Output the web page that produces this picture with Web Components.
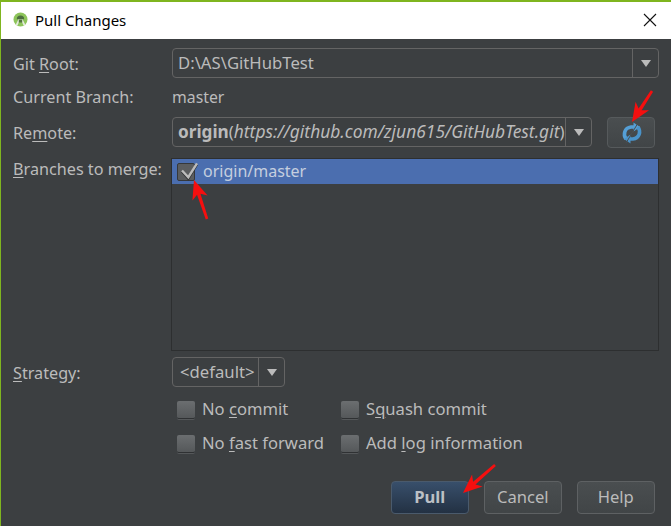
<!DOCTYPE html>
<html>
<head>
<meta charset="utf-8">
<title>Pull Changes</title>
<style>
html, body { margin: 0; padding: 0; background: #3c3f41; }
body { width: 671px; height: 526px; overflow: hidden; font-family: "Noto Sans", sans-serif; font-size: 16.2px; color: #bbbbbb; }
u { text-underline-offset: 2px; text-decoration-thickness: 1px; }
b { font-weight: 700; font-size: 17.2px; }
i { font-style: italic; font-size: 17.4px; }
</style>
</head>
<body>
<pull-dialog>
  <ij-titlebar slot="title">Pull Changes</ij-titlebar>

  <span slot="root-label">Git <u>R</u>oot:</span>
  <ij-combo slot="root" style="width:487px">D:\AS\GitHubTest</ij-combo>

  <span slot="branch-label">Current Branch:</span>
  <span slot="branch" style="font-size:15.8px">master</span>

  <span slot="remote-label">Re<u>m</u>ote:</span>
  <ij-combo slot="remote" style="width:420px"><b>origin</b>(<i>https://github.com/zjun615/GitHubTest.git</i>)</ij-combo>
  <ij-button slot="refresh" kind="icon">
    <svg width="22" height="22" viewBox="0 0 22 22" fill="none" style="margin-left:2px">
      <path d="M5 17C1.800 12.500 3.500 5.800 10 5L14 5" stroke="#559fd6" stroke-width="3.600"/>
      <path d="M12.500 0.500L19 5L12.500 9.500Z" fill="#559fd6"/>
      <path d="M17 5C20.200 9.500 18.500 16.200 12 17L8 17" stroke="#4a93c9" stroke-width="3.600"/>
      <path d="M9.500 12.500L3 17L9.500 21.500Z" fill="#4a93c9"/>
      <path d="M17 1L5 21" stroke="#4a4e50" stroke-width="1"/>
    </svg>
  </ij-button>

  <span slot="merge-label"><u>B</u>ranches to merge:</span>
  <ij-list slot="merge">
    <ij-check checked selected>origin/master</ij-check>
  </ij-list>

  <span slot="strategy-label"><u>S</u>trategy:</span>
  <ij-combo slot="strategy" style="width:113px;--val-pad:7px">&lt;default&gt;</ij-combo>

  <ij-check slot="opt">No <u>c</u>ommit</ij-check>
  <ij-check slot="opt">S<u>q</u>uash commit</ij-check>
  <ij-check slot="opt">No <u>f</u>ast forward</ij-check>
  <ij-check slot="opt">Add <u>l</u>og information</ij-check>

  <ij-button slot="action" kind="default">Pull</ij-button>
  <ij-button slot="action">Cancel</ij-button>
  <ij-button slot="action">Help</ij-button>
</pull-dialog>

<red-arrow x1="652" y1="91" x2="632" y2="122"></red-arrow>
<red-arrow x1="207" y1="219" x2="194" y2="180"></red-arrow>
<red-arrow x1="495" y1="465" x2="463" y2="493"></red-arrow>

<script>
const dialogT = document.createElement('template');
dialogT.innerHTML = `
<style>
:host {
  display: flex;
  flex-direction: column;
  box-sizing: border-box;
  width: 671px;
  height: 526px;
  border-left: 1px solid #7fb51f;
  border-top: 2px solid #7fb51f;
  background: #3c3f41;
}
.form {
  display: grid;
  grid-template-columns: 159px 1fr;
  grid-template-rows: 30px 39px 30px 210px 30px;
  padding: 9px 12px 0 12px;
  align-items: center;
}
.form > .lbl { padding-top: 2px; }
.form > .cur { padding-bottom: 2px; }
.form > .top { align-self: start; padding-top: 11px; line-height: 22px; }
.field { display: flex; align-items: center; }
.cur-val { margin-top: -2px; }
.remote { justify-content: space-between; padding-right: 4px; }
.list { align-self: stretch; align-items: stretch; padding-top: 11px; padding-bottom: 6px; margin-left: -1px; }
.list ::slotted(*) { flex: 1; }
.opts {
  display: grid;
  grid-template-columns: 164px auto;
  grid-auto-rows: 34px;
  justify-content: start;
  padding: 13px 0 0 176px;
  font-size: 16.6px;
}
.actions {
  display: flex;
  justify-content: flex-end;
  gap: 14.5px;
  padding: 13px 16px 0 0;
  font-size: 16.6px;
}
</style>
<slot name="title"></slot>
<div class="form">
  <div class="lbl"><slot name="root-label"></slot></div>
  <div class="field"><slot name="root"></slot></div>
  <div class="cur"><slot name="branch-label"></slot></div>
  <div class="field cur-val"><slot name="branch"></slot></div>
  <div class="lbl"><slot name="remote-label"></slot></div>
  <div class="field remote"><slot name="remote"></slot><slot name="refresh"></slot></div>
  <div class="top"><slot name="merge-label"></slot></div>
  <div class="field list"><slot name="merge"></slot></div>
  <div class="lbl"><slot name="strategy-label"></slot></div>
  <div class="field"><slot name="strategy"></slot></div>
</div>
<div class="opts"><slot name="opt"></slot></div>
<div class="actions"><slot name="action"></slot></div>
`;
class PullDialog extends HTMLElement {
  constructor() {
    super();
    this.attachShadow({ mode: 'open' }).appendChild(dialogT.content.cloneNode(true));
  }
}
customElements.define('pull-dialog', PullDialog);

const titleT = document.createElement('template');
titleT.innerHTML = `
<style>
:host {
  display: flex;
  align-items: center;
  gap: 7px;
  box-sizing: border-box;
  height: 37px;
  flex: none;
  padding: 0 0 2px 12px;
  background: #fff;
  color: #000;
  font-size: 15px;
}
.close { margin-left: auto; margin-right: 14px; display: block; }
.logo { display: block; }
</style>
<svg class="logo" width="15" height="15" viewBox="0 0 15 15">
  <circle cx="7.500" cy="7.500" r="7" fill="#8dc45a"/>
  <path d="M3.800 7.300a3.700 3.700 0 0 1 7.400 0z" fill="#4c6d3e"/>
  <path d="M2.500 13L5.500 7.300h4L12.500 13L10.500 13.500L9 10H6L4.500 13.500Z" fill="#e4ebdc"/>
  <path d="M5.800 7.500h3.400v3H5.800z" fill="#53733f"/>
</svg>
<span><slot></slot></span>
<svg class="close" width="14" height="14" viewBox="0 0 14 14">
  <path d="M1 1L13 13M13 1L1 13" stroke="#111" stroke-width="1.100"/>
</svg>
`;
class IjTitlebar extends HTMLElement {
  constructor() {
    super();
    this.attachShadow({ mode: 'open' }).appendChild(titleT.content.cloneNode(true));
  }
}
customElements.define('ij-titlebar', IjTitlebar);

const comboT = document.createElement('template');
comboT.innerHTML = `
<style>
:host {
  display: flex;
  box-sizing: border-box;
  height: 30px;
  border: 1px solid #646464;
  border-radius: 4px;
  background: #3c3f41;
  color: #bbb;
  font-size: 16.7px;
}
.val {
  flex: 1;
  min-width: 0;
  overflow: hidden;
  white-space: nowrap;
  padding-left: var(--val-pad, 5px);
  line-height: 27px;
}
.btn {
  flex: none;
  width: 25px;
  border-left: 1px solid #646464;
  display: flex;
  align-items: center;
  justify-content: center;
}
.btn i {
  width: 0;
  height: 0;
  border-left: 5px solid transparent;
  border-right: 5px solid transparent;
  border-top: 7px solid #bbb;
}
</style>
<div class="val"><slot></slot></div>
<div class="btn"><i></i></div>
`;
class IjCombo extends HTMLElement {
  constructor() {
    super();
    this.attachShadow({ mode: 'open' }).appendChild(comboT.content.cloneNode(true));
  }
}
customElements.define('ij-combo', IjCombo);

const listT = document.createElement('template');
listT.innerHTML = `
<style>
:host {
  display: block;
  box-sizing: border-box;
  border: 1px solid #2d2f30;
  background: #3c3f41;
}
</style>
<slot></slot>
`;
class IjList extends HTMLElement {
  constructor() {
    super();
    this.attachShadow({ mode: 'open' }).appendChild(listT.content.cloneNode(true));
  }
}
customElements.define('ij-list', IjList);

const checkT = document.createElement('template');
checkT.innerHTML = `
<style>
:host {
  display: flex;
  align-items: center;
  gap: 7px;
  height: 20px;
  white-space: nowrap;
  color: #bbb;
}
:host([selected]) {
  height: 25px;
  padding-left: 5px;
  gap: 8px;
  background: #4b6eaf;
  color: #c5cfdf;
  font-size: 16px;
}
.text { margin-top: -4px; }
:host([selected]) .text { margin-top: -2px; }
.box {
  position: relative;
  flex: none;
  box-sizing: border-box;
  width: 18px;
  height: 18px;
  border-radius: 2px;
  background: linear-gradient(#6b6e70, #55585a);
  border-bottom: 1px solid #2f3133;
  box-shadow: 0 1px 0 #55585a;
}
:host([selected]) .box {
  background: #5b5d5f;
  border: 1px solid #36383a;
  box-shadow: none;
}
svg { position: absolute; left: 0; top: -4px; display: none; }
:host([checked]) svg { display: block; }
</style>
<span class="box">
  <svg width="21" height="21" viewBox="0 0 21 21" fill="none">
    <path d="M4 11.500L10.300 18.700L19 4.300" stroke="#2f3133" stroke-width="2.400"/>
    <path d="M4 10.500L10.300 17.200L19 3.300" stroke="#bcbcbc" stroke-width="2.400"/>
  </svg>
</span>
<span class="text"><slot></slot></span>
`;
class IjCheck extends HTMLElement {
  constructor() {
    super();
    this.attachShadow({ mode: 'open' }).appendChild(checkT.content.cloneNode(true));
  }
}
customElements.define('ij-check', IjCheck);

const buttonT = document.createElement('template');
buttonT.innerHTML = `
<style>
:host {
  display: flex;
  align-items: center;
  justify-content: center;
  box-sizing: border-box;
  width: 78.500px;
  height: 33px;
  padding-bottom: 2px;
  border: 1px solid #5e6163;
  border-radius: 4px;
  background: linear-gradient(#4a4e50, #414547);
  color: #bbb;
}
:host([kind="default"]) {
  background: linear-gradient(#384f6b, #233143);
  border-color: #4a5a6c;
  font-weight: 700;
  color: #bcc0c5;
}
:host([kind="icon"]) {
  width: 48px;
  height: 31px;
  margin-top: 1px;
  padding: 0;
  border-color: #565a5c;
}
</style>
<slot></slot>
`;
class IjButton extends HTMLElement {
  constructor() {
    super();
    this.attachShadow({ mode: 'open' }).appendChild(buttonT.content.cloneNode(true));
  }
}
customElements.define('ij-button', IjButton);

// hand-drawn annotation arrows lying over the dialog
class RedArrow extends HTMLElement {
  constructor() {
    super();
    this.attachShadow({ mode: 'open' });
  }
  connectedCallback() {
    const [x1, y1, x2, y2] = ['x1', 'y1', 'x2', 'y2'].map(a => +this.getAttribute(a));
    const ang = Math.atan2(y2 - y1, x2 - x1) * 180 / Math.PI;
    const len = Math.hypot(x2 - x1, y2 - y1);
    this.shadowRoot.innerHTML = `
<style>
:host { position: absolute; left: 0; top: 0; pointer-events: none; }
svg { display: block; overflow: visible; }
</style>
<svg width="1" height="1">
  <g transform="translate(${x2} ${y2}) rotate(${ang})">
    <path d="M${-len} -1.300L-15 -1.800L-19 -8L0 0L-19 8L-15 1.800L${-len} 1.300Z" fill="#f50f0f"/>
  </g>
</svg>`;
  }
}
customElements.define('red-arrow', RedArrow);
</script>
</body>
</html>
